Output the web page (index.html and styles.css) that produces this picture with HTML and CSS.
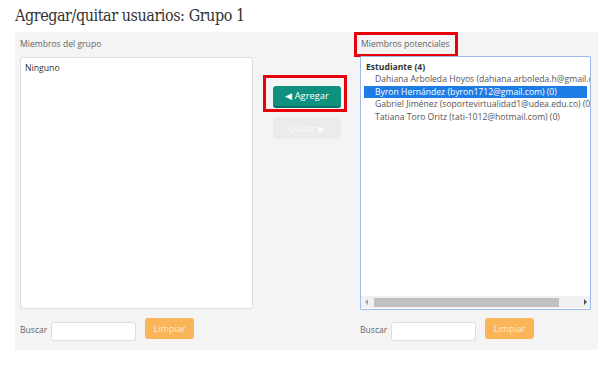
FILE: index.html
```html
<!DOCTYPE html>
<html lang="es">
  <head>
    <meta charset="UTF-8" />
    <title>Agregar/quitar usuarios</title>
    <link rel="stylesheet" href="styles.css">
  </head>
  <body>
    <h2 class="page-title">Agregar/quitar usuarios: Grupo 1</h2>
    <div class="panel">
      <div class="column column-left">
        <label class="col-label">Miembros del grupo</label>
        <div class="list-box">
          <div class="list-item">Ninguno</div>
        </div>
        <div class="search-row">
          <span class="search-label">Buscar</span>
          <input type="text" class="search-input" />
          <button class="btn-clear">Limpiar</button>
        </div>
      </div>

      <div class="column column-middle">
        <div class="highlight-box">
          <button class="btn-add">&#9664; Agregar</button>
        </div>
        <button class="btn-remove" disabled>Quitar &#9654;</button>
      </div>

      <div class="column column-right">
        <label class="col-label"><span class="highlight-label">Miembros potenciales</span></label>
        <div class="list-box list-box-focus">
          <div class="options">
            <div class="optgroup">Estudiante (4)</div>
            <div class="option">Dahiana Arboleda Hoyos (dahiana.arboleda.h@gmail.com) (0)</div>
            <div class="option selected">Byron Hernández (byron1712@gmail.com) (0)</div>
            <div class="option">Gabriel Jiménez (soportevirtualidad1@udea.edu.co) (0)</div>
            <div class="option">Tatiana Toro Oritz (tati-1012@hotmail.com) (0)</div>
          </div>
          <div class="hscroll">
            <span class="arrow arrow-left"></span>
            <span class="thumb"></span>
            <span class="arrow arrow-right"></span>
          </div>
        </div>
        <div class="search-row">
          <span class="search-label">Buscar</span>
          <input type="text" class="search-input" />
          <button class="btn-clear">Limpiar</button>
        </div>
      </div>
    </div>
  </body>
</html>
```

FILE: styles.css
```css
* {
  box-sizing: border-box;
  margin: 0;
  padding: 0;
}

body {
  background: #fff;
  font-family: "Open Sans", "DejaVu Sans", sans-serif;
  color: #333;
}

.page-title {
  font-family: "DejaVu Serif Condensed", "DejaVu Serif", serif;
  font-stretch: condensed;
  font-weight: normal;
  font-size: 16px;
  letter-spacing: -0.45px;
  color: #333;
  padding: 6px 0 0 15px;
  height: 32px;
}

.panel {
  display: flex;
  background: #f4f4f4;
  margin: 0 4px 0 15px;
  padding: 6px 7px 11px 5px;
}

.column {
  display: flex;
  flex-direction: column;
}

.column-left {
  width: 233px;
}

.column-middle {
  width: 107px;
  padding-left: 10px;
}

.column-right {
  width: 231px;
}

.col-label {
  display: block;
  height: 13px;
  line-height: 13px;
  font-size: 8.6px;
  color: #666;
  margin-bottom: 6px;
}

.highlight-label {
  display: inline-block;
  outline: 3px solid #e8000b;
  outline-offset: 3px;
  line-height: 13px;
  padding: 0 2px 0 1px;
}

.list-box {
  height: 252px;
  background: #fff;
  border: 1px solid #ddd;
  border-radius: 3px;
  padding: 4px 4px;
}

.list-item {
  font-size: 8.7px;
  color: #333;
  line-height: 12px;
}

.list-box-focus {
  height: 254px;
  margin-top: -1px;
  margin-bottom: -1px;
  border: 1px solid #9dbcec;
  border-radius: 1px;
  padding: 0;
  display: flex;
  flex-direction: column;
  overflow: hidden;
}

.options {
  flex: 1;
  padding: 4px 3px 0 3px;
  overflow: hidden;
  white-space: nowrap;
  font-size: 8.6px;
  line-height: 12.4px;
  color: #555;
}

.optgroup {
  font-weight: bold;
  color: #333;
  padding-left: 2px;
}

.option {
  padding-left: 11px;
}

.option.selected {
  background: #1e7ce6;
  color: #fff;
}

.hscroll {
  display: flex;
  align-items: center;
  height: 12px;
  background: #f1f1f1;
  margin-bottom: 1px;
}

.arrow {
  width: 0;
  height: 0;
  border-top: 3px solid transparent;
  border-bottom: 3px solid transparent;
}

.arrow-left {
  border-right: 3px solid #a3a3a3;
  margin: 0 6px 0 4px;
}

.arrow-right {
  border-left: 3px solid #505050;
  margin: 0 3px 0 auto;
}

.thumb {
  width: 185px;
  height: 9px;
  background: #c1c1c1;
}

.search-row {
  display: flex;
  align-items: flex-start;
  margin-top: 9px;
  height: 21px;
}

.search-label {
  font-size: 8.6px;
  color: #666;
  margin-top: 6px;
  width: 31px;
}

.search-input {
  width: 85px;
  height: 19px;
  margin-top: 4px;
  border: 1px solid #ddd;
  border-radius: 3px;
  background: #fff;
  outline: none;
}

.btn-clear {
  margin-left: 9px;
  width: 49px;
  height: 21px;
  border: none;
  border-radius: 3px;
  background: #f9b558;
  color: #fdebd2;
  font-family: "Open Sans", sans-serif;
  font-size: 9px;
}

.highlight-box {
  width: 84px;
  height: 37px;
  margin-top: 37px;
  border: 3px solid #e8000b;
  padding: 4px 3px 5px 7px;
}

.btn-add {
  width: 68px;
  height: 22px;
  border: none;
  border-bottom: 2px solid #0a6e62;
  border-radius: 3px;
  background: #10917f;
  color: #fff;
  font-family: "Open Sans", sans-serif;
  font-size: 9.3px;
}

.btn-remove {
  width: 68px;
  height: 22px;
  margin: 5px 0 0 10px;
  border: none;
  border-radius: 3px;
  background: #ebebeb;
  color: #fafafa;
  font-family: "Open Sans", sans-serif;
  font-size: 9.3px;
}
```
